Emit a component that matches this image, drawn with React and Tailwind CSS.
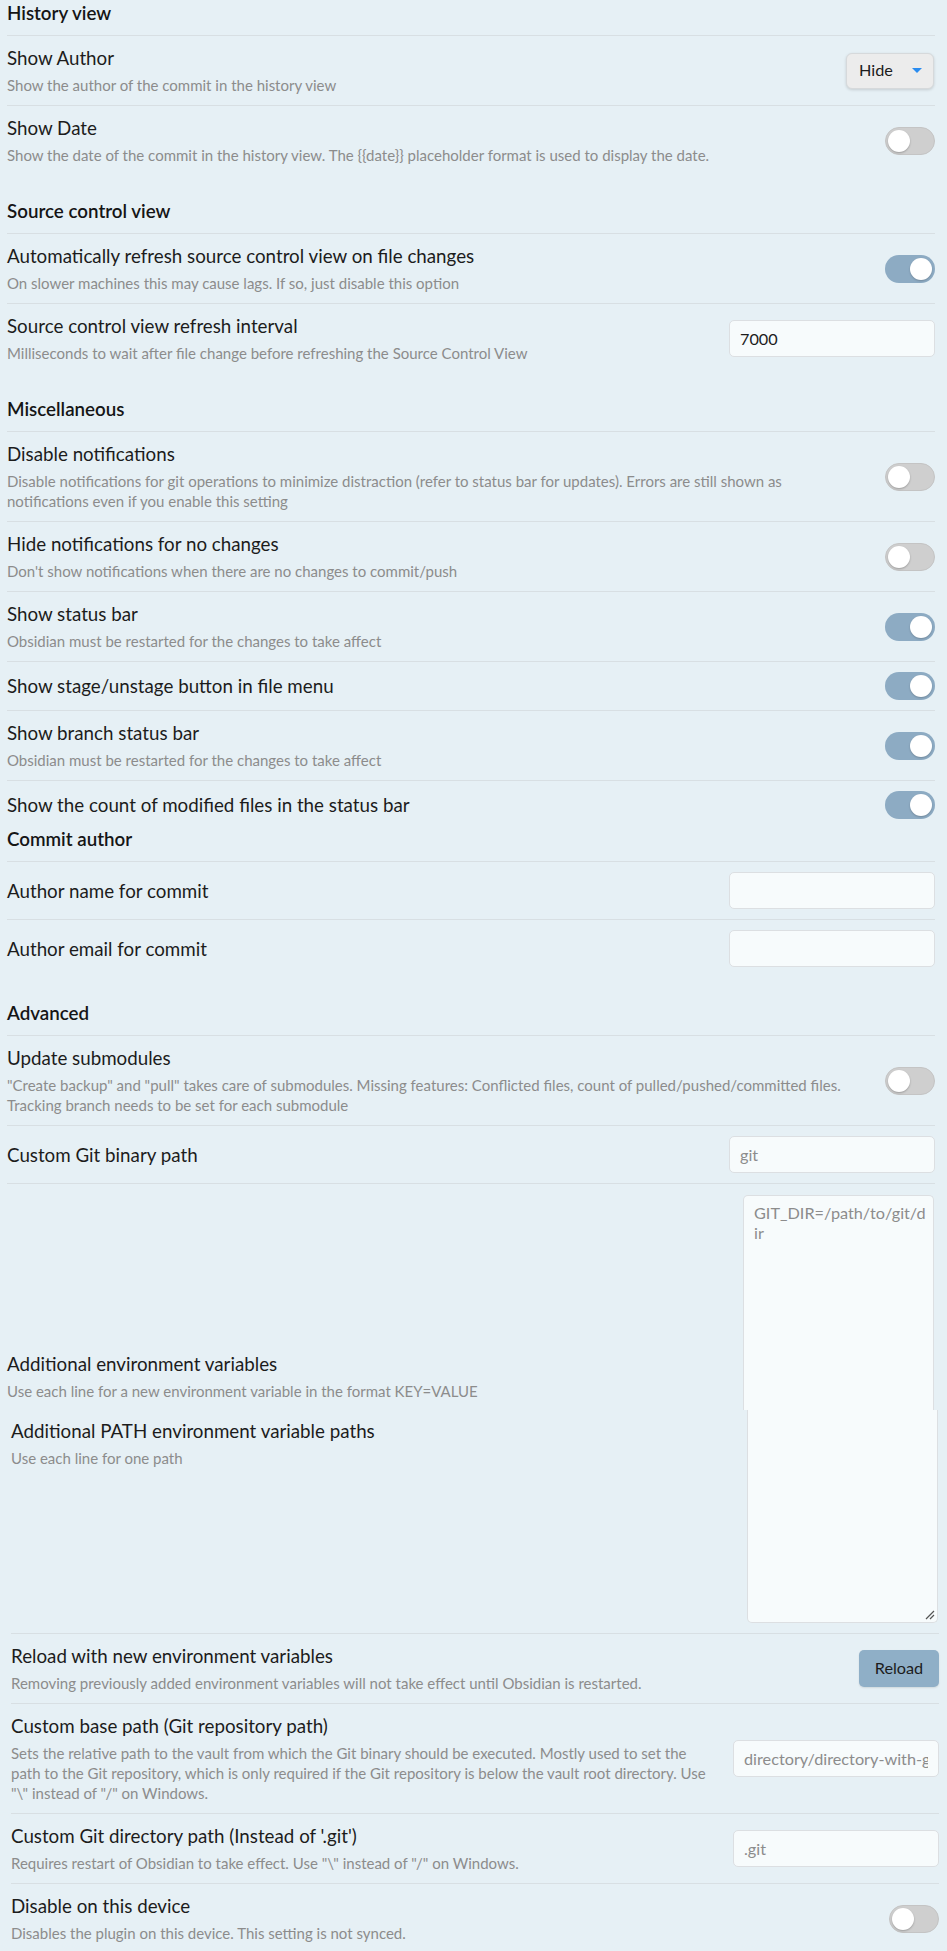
import React from "react";

function Heading({ children, first, tight }) {
  return (
    <div
      className={
        (first ? "pt-[1px] " : tight ? "pt-0 " : "pt-6 ") +
        "pb-[10px] border-b border-[#d8dfe3] text-[18.75px] leading-[24px] font-semibold text-[#151515]"
      }
    >
      {children}
    </div>
  );
}

function Row({ name, desc, control, first, extra = "" }) {
  return (
    <div
      className={
        "flex items-center py-[10px] " +
        (first ? "" : "border-t border-[#d8dfe3] ") +
        extra
      }
    >
      <div className="flex-1 min-w-0 mr-4">
        <div className="text-[18.75px] leading-[24px] text-[#1c1c1c]">{name}</div>
        {desc && (
          <div className="mt-[5px] text-[15px] leading-[20px] text-[#8c8c8c]">{desc}</div>
        )}
      </div>
      {control}
    </div>
  );
}

function Toggle({ on }) {
  if (on) {
    return (
      <div className="shrink-0 w-[50px] h-[28px] rounded-full bg-[#8dabc3] p-[3px] flex justify-end items-center">
        <div className="w-[22px] h-[22px] rounded-full bg-white shadow-[0_1px_2px_rgba(0,0,0,0.2)]" />
      </div>
    );
  }
  return (
    <div className="shrink-0 w-[50px] h-[28px] rounded-full bg-[#cfcfcf] border border-[#c4c4c4] p-[2px] flex items-center">
      <div className="w-[22px] h-[22px] rounded-full bg-white shadow-[0_1px_2px_rgba(0,0,0,0.25)]" />
    </div>
  );
}

function TextInput({ value, placeholder }) {
  return (
    <input
      readOnly
      defaultValue={value}
      placeholder={placeholder}
      className="shrink-0 w-[206px] h-[37px] rounded-[5px] border border-[#dcdfe2] bg-[#f7fbfc] px-[10px] text-[16.25px] text-[#1c1c1c] placeholder:text-[#8c8c8c] outline-none"
    />
  );
}

function Dropdown() {
  return (
    <div className="shrink-0 mr-[1px] w-[88px] h-[36px] rounded-[6px] border border-[#d6d9db] bg-[#ececec] shadow-[0_1px_3px_rgba(0,0,0,0.15)] flex items-center justify-between pl-[12px] pr-[11px] text-[16.25px] text-[#1c1c1c]">
      <span>Hide</span>
      <svg width="10" height="6" viewBox="0 0 10 6">
        <path d="M0 0 L10 0 L5 5 Z" fill="#2a8cf0" />
      </svg>
    </div>
  );
}

export default function App() {
  return (
    <div className="w-[947px] h-[1951px] overflow-hidden bg-[#e6f0f5] pl-[7px] pr-[12px] font-['Lato',sans-serif]">
      <Heading first>History view</Heading>
      <Row
        first
        name="Show Author"
        desc="Show the author of the commit in the history view"
        control={<Dropdown />}
      />
      <Row
        name="Show Date"
        desc="Show the date of the commit in the history view. The {{date}} placeholder format is used to display the date."
        control={<Toggle on={false} />}
      />

      <Heading>Source control view</Heading>
      <Row
        first
        name="Automatically refresh source control view on file changes"
        desc="On slower machines this may cause lags. If so, just disable this option"
        control={<Toggle on />}
      />
      <Row
        name="Source control view refresh interval"
        desc="Milliseconds to wait after file change before refreshing the Source Control View"
        control={<TextInput value="7000" />}
      />

      <Heading>Miscellaneous</Heading>
      <Row
        first
        name="Disable notifications"
        desc={
          <>
            Disable notifications for git operations to minimize distraction (refer to status bar for updates). Errors are still shown as
            <br />
            notifications even if you enable this setting
          </>
        }
        control={<Toggle on={false} />}
      />
      <Row
        name="Hide notifications for no changes"
        desc="Don't show notifications when there are no changes to commit/push"
        control={<Toggle on={false} />}
      />
      <Row
        name="Show status bar"
        desc="Obsidian must be restarted for the changes to take affect"
        control={<Toggle on />}
      />
      <Row name="Show stage/unstage button in file menu" control={<Toggle on />} />
      <Row
        name="Show branch status bar"
        desc="Obsidian must be restarted for the changes to take affect"
        control={<Toggle on />}
      />
      <Row
        name="Show the count of modified files in the status bar"
        control={<Toggle on />}
        extra="!pb-[8px]"
      />

      <Heading tight>Commit author</Heading>
      <Row first name="Author name for commit" control={<TextInput />} />
      <Row name="Author email for commit" control={<TextInput />} />

      <Heading>Advanced</Heading>
      <Row
        first
        name="Update submodules"
        desc={
          <>
            "Create backup" and "pull" takes care of submodules. Missing features: Conflicted files, count of pulled/pushed/committed files.
            <br />
            Tracking branch needs to be set for each submodule
          </>
        }
        control={<Toggle on={false} />}
      />
      <Row name="Custom Git binary path" control={<TextInput placeholder="git" />} />

      {/* Additional environment variables */}
      <div className="flex items-end border-t border-[#d8dfe3] pt-[11px]">
        <div className="flex-1 min-w-0 mr-4 pb-[9px]">
          <div className="text-[18.75px] leading-[24px] text-[#1c1c1c]">Additional environment variables</div>
          <div className="mt-[5px] text-[15px] leading-[20px] text-[#8c8c8c]">
            Use each line for a new environment variable in the format KEY=VALUE
          </div>
        </div>
        <div className="shrink-0 mr-[1px] w-[191px] h-[215px] rounded-t-[5px] border border-b-0 border-[#dcdfe2] bg-[#f7fbfc] px-[10px] pt-[7px] text-[16.25px] leading-[20px] text-[#8c8c8c] whitespace-nowrap overflow-hidden">
          GIT_DIR=/path/to/git/d
          <br />
          ir
        </div>
      </div>

      <div className="ml-[4px] -mr-[4px]">
        {/* Additional PATH */}
        <div className="flex items-start pb-[10px]">
          <div className="flex-1 min-w-0 mr-4 pt-[9px]">
            <div className="text-[18.75px] leading-[24px] text-[#1c1c1c]">Additional PATH environment variable paths</div>
            <div className="mt-[5px] text-[15px] leading-[20px] text-[#8c8c8c]">Use each line for one path</div>
          </div>
          <div className="relative shrink-0 mr-[1px] w-[191px] h-[213px] rounded-b-[5px] border border-t-0 border-[#dcdfe2] bg-[#f7fbfc]">
            <svg className="absolute right-[2px] bottom-[2px]" width="10" height="10" viewBox="0 0 10 10">
              <path d="M9 1 L1 9 M9 5 L5 9" stroke="#555" strokeWidth="1.2" />
            </svg>
          </div>
        </div>

        <Row
          name="Reload with new environment variables"
          desc="Removing previously added environment variables will not take effect until Obsidian is restarted."
          control={
            <button className="shrink-0 w-[80px] h-[37px] rounded-[5px] bg-[#8fafc7] text-[16.25px] text-[#1c1c1c] shadow-[0_1px_2px_rgba(0,0,0,0.1)]">
              Reload
            </button>
          }
        />
        <Row
          name="Custom base path (Git repository path)"
          desc={
            <>
              Sets the relative path to the vault from which the Git binary should be executed. Mostly used to set the
              <br />
              path to the Git repository, which is only required if the Git repository is below the vault root directory. Use
              <br />
              "\" instead of "/" on Windows.
            </>
          }
          control={<TextInput placeholder="directory/directory-with-git" />}
        />
        <Row
          name="Custom Git directory path (Instead of '.git')"
          desc={'Requires restart of Obsidian to take effect. Use "\\" instead of "/" on Windows.'}
          control={<TextInput placeholder=".git" />}
        />
        <Row
          name="Disable on this device"
          desc="Disables the plugin on this device. This setting is not synced."
          control={<Toggle on={false} />}
        />
      </div>
    </div>
  );
}
